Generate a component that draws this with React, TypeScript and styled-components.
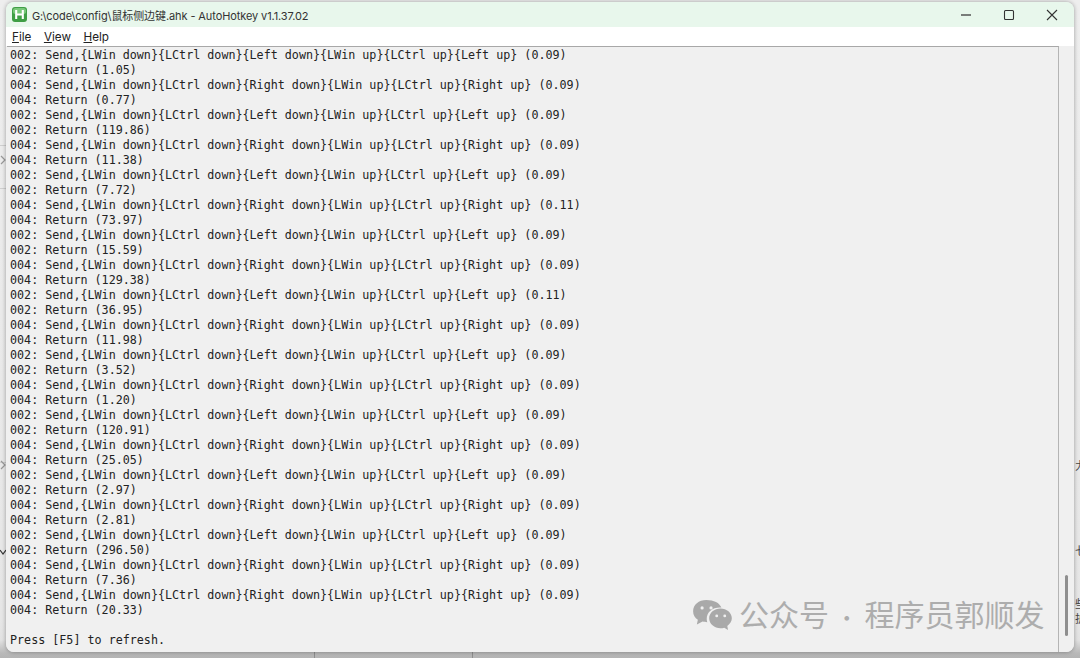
import React from "react";
import styled, { createGlobalStyle } from "styled-components";

const Global = createGlobalStyle`
  html, body { margin: 0; padding: 0; background: #e9e9e9; }
  #root { width: 1080px; height: 658px; overflow: hidden; }
`;

const Desktop = styled.div`
  position: relative;
  width: 1080px;
  height: 658px;
  box-sizing: border-box;
  padding: 2px 6px 6px 6px;
  overflow: hidden;
  background: linear-gradient(to bottom, #eeeeee 0, #e6e6e6 620px, #e2e2e2 640px, #b9b9b9 653px, #b4b4b4 100%);
`;

const BehindStrip = styled.div`
  position: absolute;
  left: 1075px;
  top: 0;
  width: 5px;
  height: 658px;
  overflow: hidden;
`;

const Fragment = styled.span<{ $y: number }>`
  position: absolute;
  left: 0;
  top: ${(p) => p.$y}px;
  font: 11px "Noto Sans CJK SC", "Liberation Sans", sans-serif;
  line-height: 12px;
  color: #444;
`;

const Chevron = styled.svg<{ $y: number; $dark?: boolean }>`
  position: absolute;
  left: 0;
  top: ${(p) => p.$y}px;
  width: 6px;
  height: 10px;
  fill: none;
  stroke: ${(p) => (p.$dark ? "#333" : "#999")};
  stroke-width: 1.2;
`;

const LeftRule = styled.div<{ $y: number }>`
  position: absolute;
  left: 0;
  top: ${(p) => p.$y}px;
  width: 6px;
  height: 1px;
  background: #cfcfcf;
`;

const Seam = styled.div<{ $x: number }>`
  position: absolute;
  left: ${(p) => p.$x}px;
  top: 652px;
  width: 1px;
  height: 6px;
  background: #8e8e8e;
`;

const Window = styled.div`
  position: relative;
  height: 100%;
  display: flex;
  flex-direction: column;
  border-radius: 8px;
  overflow: hidden;
  background: #f0f0f0;
  box-shadow: 0 0 4px rgba(0, 0, 0, 0.35);
`;

const TitleBar = styled.div`
  flex: 0 0 25px;
  display: flex;
  align-items: center;
  background: #e8f7ec;
  padding-left: 6px;
`;

const AppIcon = styled.svg`
  width: 15px;
  height: 15px;
  flex: none;
  margin-right: 5px;
`;

const Title = styled.div`
  font: 11px "Inter", "Noto Sans CJK SC", sans-serif;
  letter-spacing: -0.1px;
  color: #333;
  white-space: nowrap;
  flex: 1;
`;

const Controls = styled.div`
  display: flex;
  align-items: center;
  margin-right: 14px;
  gap: 27px;
`;

const ControlIcon = styled.svg`
  width: 16px;
  height: 16px;
  fill: none;
  stroke: #333;
  stroke-width: 1.1;
`;

const MenuBar = styled.div`
  flex: 0 0 19px;
  display: flex;
  align-items: center;
  background: #fff;
  padding-left: 6px;
  gap: 12.5px;
  font: 11.7px "Inter", "Liberation Sans", sans-serif;
  color: #222;
`;

const MenuItem = styled.span`
  &::first-letter {
    text-decoration: underline;
  }
`;

const Body = styled.div`
  flex: 1;
  min-height: 0;
  display: flex;
  background: #f0f0f0;
`;

const Log = styled.pre`
  flex: 1;
  margin: 0;
  box-sizing: border-box;
  padding: 1px 0 0 3px;
  margin-left: 1px;
  border-top: 1px solid #a8a8a8;
  border-right: 1px solid #b4b4b4;
  font: 11.71px/15px "DejaVu Sans Mono", monospace;
  color: #222;
  overflow: hidden;
`;

const ScrollTrack = styled.div`
  flex: 0 0 15px;
  display: flex;
  flex-direction: column;
  justify-content: flex-end;
  align-items: center;
  padding-bottom: 16px;
`;

const ScrollThumb = styled.div`
  width: 3px;
  height: 61px;
  border-radius: 2px;
  background: #8f8f8f;
`;

const Watermark = styled.div`
  position: absolute;
  left: 692px;
  top: 594px;
  display: flex;
  align-items: center;
  gap: 7px;
  font: 30px "Noto Sans CJK SC", sans-serif;
  line-height: 38px;
  color: #adadad;
  white-space: nowrap;
`;

const Dot = styled.span`
  font-size: 22px;
`;

const WeChat = styled.svg`
  width: 40px;
  height: 34px;
  fill: #a9a9a9;
`;

const left = (t: string) => `002: Send,{LWin down}{LCtrl down}{Left down}{LWin up}{LCtrl up}{Left up} (${t})`;
const right = (t: string) => `004: Send,{LWin down}{LCtrl down}{Right down}{LWin up}{LCtrl up}{Right up} (${t})`;
const lret = (t: string) => `002: Return (${t})`;
const rret = (t: string) => `004: Return (${t})`;

const lines = [
  left("0.09"), lret("1.05"),
  right("0.09"), rret("0.77"),
  left("0.09"), lret("119.86"),
  right("0.09"), rret("11.38"),
  left("0.09"), lret("7.72"),
  right("0.11"), rret("73.97"),
  left("0.09"), lret("15.59"),
  right("0.09"), rret("129.38"),
  left("0.11"), lret("36.95"),
  right("0.09"), rret("11.98"),
  left("0.09"), lret("3.52"),
  right("0.09"), rret("1.20"),
  left("0.09"), lret("120.91"),
  right("0.09"), rret("25.05"),
  left("0.09"), lret("2.97"),
  right("0.09"), rret("2.81"),
  left("0.09"), lret("296.50"),
  right("0.09"), rret("7.36"),
  right("0.09"), rret("20.33"),
  "",
  "Press [F5] to refresh.",
];

export default function App() {
  return (
    <>
      <Global />
      <Desktop>
        <LeftRule $y={145} />
        <LeftRule $y={188} />
        <LeftRule $y={462} />
        <Seam $x={314} />
        <Seam $x={472} />
        <Chevron $y={155} viewBox="0 0 6 10"><path d="M1 1l4 4-4 4" /></Chevron>
        <Chevron $y={460} viewBox="0 0 6 10"><path d="M1 1l4 4-4 4" /></Chevron>
        <Chevron $y={547} $dark viewBox="0 0 6 10"><path d="M0 3l3 4 3-4" /></Chevron>
        <BehindStrip>
          <Fragment $y={459}>力</Fragment>
          <Fragment $y={544}>七</Fragment>
          <Fragment $y={597}>些</Fragment>
          <Fragment $y={612}>护</Fragment>
        </BehindStrip>
        <Window>
          <TitleBar>
            <AppIcon viewBox="0 0 15 15">
              <rect width="15" height="15" rx="3" fill="#3f9e45" />
              <rect x="1" y="1" width="13" height="6" rx="2.5" fill="#79c97a" />
              <path d="M4.2 3v9M10.8 3v9M4.2 7.5h6.6" stroke="#fff" strokeWidth="2.1" fill="none" />
            </AppIcon>
            <Title>G:\code\config\鼠标侧边键.ahk - AutoHotkey v1.1.37.02</Title>
            <Controls>
              <ControlIcon viewBox="0 0 16 16"><path d="M3 8h10" strokeWidth="1.4" stroke="#555" /></ControlIcon>
              <ControlIcon viewBox="0 0 16 16"><rect x="3.500" y="3.500" width="9" height="9" rx="1" /></ControlIcon>
              <ControlIcon viewBox="0 0 16 16"><path d="M3 3l10 10M13 3L3 13" /></ControlIcon>
            </Controls>
          </TitleBar>
          <MenuBar>
            <MenuItem>File</MenuItem>
            <MenuItem>View</MenuItem>
            <MenuItem>Help</MenuItem>
          </MenuBar>
          <Body>
            <Log>{lines.join("\n")}</Log>
            <ScrollTrack><ScrollThumb /></ScrollTrack>
          </Body>
        </Window>
        <Watermark>
          <WeChat viewBox="0 0 42 36">
            <path d="M15 2C7 2 1 7 1 14c0 4 2 7 5 9l-1 5 6-3c2 .5 3 .6 5 .6-.4-1.400-.6-2.400-.6-3.600 0-7 6-12 14-12 .6 0 1 0 1.600.1C29 5 23 2 15 2z" />
            <path d="M30 11c-6.500 0-12 4.500-12 10.500S23.500 32 30 32c1.400 0 2.600-.2 4-.6l4 2.600-.8-4.400C40 27.600 42 24.600 42 21.500 42 15.500 36.500 11 30 11z" />
            <circle cx="10.500" cy="10.500" r="1.700" fill="#f0f0f0" />
            <circle cx="20" cy="10.500" r="1.700" fill="#f0f0f0" />
            <circle cx="26" cy="19" r="1.500" fill="#f0f0f0" />
            <circle cx="34.500" cy="19" r="1.500" fill="#f0f0f0" />
          </WeChat>
          <span>公众号 <Dot>·</Dot> 程序员郭顺发</span>
        </Watermark>
      </Desktop>
    </>
  );
}
